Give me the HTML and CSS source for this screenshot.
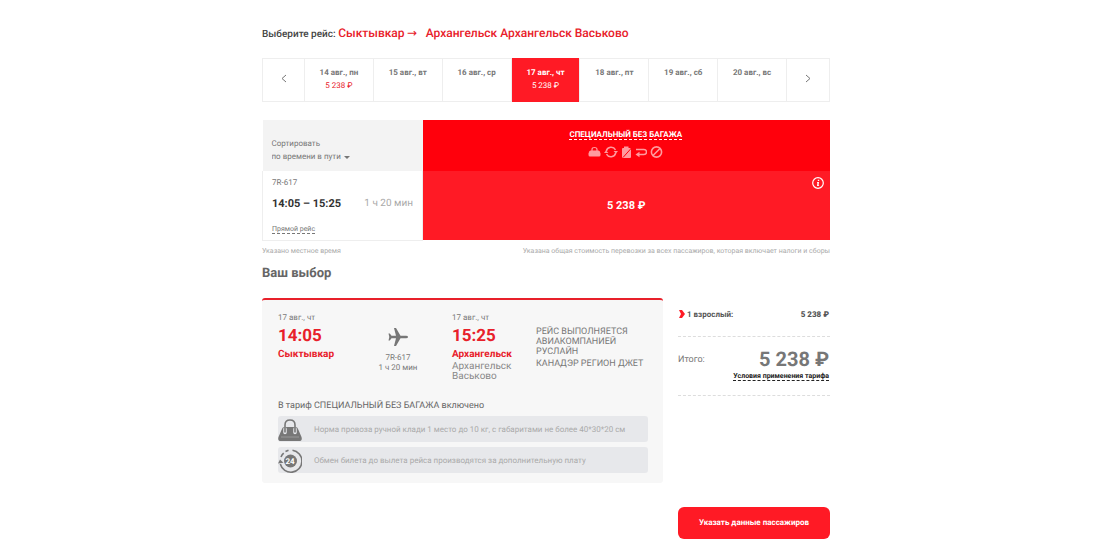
FILE: index.html
```html
<!DOCTYPE html>
<html lang="ru">
<head>
    <meta charset="UTF-8">
    <meta name="viewport" content="width=device-width, initial-scale=1.0">
    <title>Выбор рейса</title>
    <link rel="stylesheet" href="styles.css">
</head>
<body>

<main class="page">
    <h1 class="route">Выберите рейс: <span class="route-from">Сыктывкар</span> <span class="route-arrow">→</span> <span class="route-to">Архангельск Архангельск Васьково</span></h1>

    <!-- Dates -->
    <nav class="dates">
        <button class="date-arrow" aria-label="Предыдущие даты">
            <svg width="6" height="9" viewBox="0 0 6 9"><path d="M5 1 1 4.500 5 8"/></svg>
        </button>
        <button class="date">14 авг., пн <span class="date-price">5 238 ₽</span></button>
        <button class="date">15 авг., вт</button>
        <button class="date">16 авг., ср</button>
        <button class="date active">17 авг., чт <span class="date-price">5 238 ₽</span></button>
        <button class="date">18 авг., пт</button>
        <button class="date">19 авг., сб</button>
        <button class="date">20 авг., вс</button>
        <button class="date-arrow" aria-label="Следующие даты">
            <svg width="6" height="9" viewBox="0 0 6 9"><path d="M1 1 5 4.500 1 8"/></svg>
        </button>
    </nav>

    <!-- Flights and fares -->
    <table class="fares">
        <tr class="fares-head">
            <th class="sort">
                <label for="sort">Сортировать</label>
                <div class="sort-field">
                    <select id="sort">
                        <option>по времени в пути</option>
                    </select>
                    <svg width="6" height="5" viewBox="0 0 6 5"><path d="M0 2h6L3 5z" fill="#777"/></svg>
                </div>
            </th>
            <th class="fare-name">
                <a href="#">СПЕЦИАЛЬНЫЙ БЕЗ БАГАЖА</a>
                <div class="fare-icons">
                    <!-- hand luggage -->
                    <svg width="13" height="12" viewBox="0 0 13 12"><path d="M2.500 4.500h8q1.500 0 2 3v1.500q0 1.500-1.500 1.500H2Q.5 10.500.5 9V7.500q.5-3 2-3z" fill="currentColor"/><path d="M4 5V3.500Q4 1.500 6.500 1.500T9 3.500V5" fill="none" stroke="currentColor" stroke-width="1.200"/></svg>
                    <!-- exchange -->
                    <svg width="14" height="12" viewBox="0 0 14 12" fill="none" stroke="currentColor" stroke-width="1.500"><path d="M2.300 5A5 5 0 0 1 11.500 3.800M11.700 7A5 5 0 0 1 2.500 8.200"/><path d="M9.500 5h4.500L12 7.500zM4.500 7H0L2 4.500z" fill="currentColor" stroke="none"/></svg>
                    <!-- no baggage -->
                    <svg width="11" height="12" viewBox="0 0 11 12"><path d="M3 2V.5h4.500V2H9q1 0 1 1v8q0 1-1 1H2q-1 0-1-1V3q0-1 1-1z" fill="currentColor"/><path d="M2 11.500 10.500 2" stroke="#ff000c" stroke-width="1"/></svg>
                    <!-- refund -->
                    <svg width="12" height="12" viewBox="0 0 12 12"><path d="M1 3.500h8a2 2 0 0 1 0 5H4" fill="none" stroke="currentColor" stroke-width="1.500"/><path d="M.5 8.500 4.500 5.700v5.600z" fill="currentColor"/></svg>
                    <!-- not refundable -->
                    <svg width="13" height="12" viewBox="0 0 13 12" fill="none" stroke="currentColor" stroke-width="1.600"><circle cx="6.500" cy="6" r="5.100"/><path d="M3 9.500 10 2.500"/></svg>
                </div>
            </th>
        </tr>
        <tr class="fares-row">
            <td class="flight">
                <div class="flight-number">7R-617</div>
                <div class="flight-time"><b>14:05 – 15:25</b> <span>1 ч 20 мин</span></div>
                <a href="#">Прямой рейс</a>
            </td>
            <td class="fare-price">
                <button class="price">5 238 ₽</button>
                <button class="info" aria-label="Информация о тарифе">
                    <svg width="12" height="12" viewBox="0 0 12 12"><circle cx="6" cy="6" r="5.300" fill="none" stroke="#fff" stroke-width="1.200"/><path d="M5.800 2.800h1.400V4H5.800zM5 5h2L6.600 8.200h.5V9H5l.4-3.200H5z" fill="#fff"/></svg>
                </button>
            </td>
        </tr>
    </table>
    <div class="notes">
        <span>Указано местное время</span>
        <span>Указана общая стоимость перевозки за всех пассажиров, которая включает налоги и сборы</span>
    </div>

    <h2 class="choice-title">Ваш выбор</h2>

    <div class="choice">
        <!-- Selected flight -->
        <section class="ticket">
            <div class="ticket-info">
                <div class="point">
                    <div class="point-date">17 авг., чт</div>
                    <div class="point-time">14:05</div>
                    <div class="point-city">Сыктывкар</div>
                </div>
                <div class="plane">
                    <svg width="20" height="20" viewBox="0 0 20 20"><path d="M20 10q0-1.300-2-1.300h-5.500L8 1H6l2 7.700H3.500L1.800 6.500H.5L1.300 10 .5 13.500h1.300l1.700-2.200H8L6 19h2l4.500-7.700H18q2 0 2-1.300z" fill="#777"/></svg>
                    <div>7R-617</div>
                    <div>1 ч 20 мин</div>
                </div>
                <div class="point">
                    <div class="point-date">17 авг., чт</div>
                    <div class="point-time">15:25</div>
                    <div class="point-city">Архангельск</div>
                    <div class="point-airport">Архангельск Васьково</div>
                </div>
                <div class="carrier">
                    <p>РЕЙС ВЫПОЛНЯЕТСЯ АВИАКОМПАНИЕЙ РУСЛАЙН</p>
                    <p>КАНАДЭР РЕГИОН ДЖЕТ</p>
                </div>
            </div>

            <h3 class="included-title">В тариф СПЕЦИАЛЬНЫЙ БЕЗ БАГАЖА включено</h3>
            <ul class="included">
                <li>
                    <svg width="24" height="24" viewBox="0 0 24 24"><path d="M7 11V7q0-5 5-5t5 5v4" fill="none" stroke="#777" stroke-width="1.600"/><path d="M6 9h12q1.500 0 2.500 3l3 7q1.200 4-2.500 4H3q-3.700 0-2.500-4l3-7Q4.500 9 6 9z" fill="#777"/><path d="M7 11v3.500M17 11v3.500" stroke="#e7e8eb" stroke-width="3.500" stroke-linecap="round"/><path d="M7 9v5.500M17 9v5.500" stroke="#777" stroke-width="1.600"/><path d="M3 19h18" stroke="#999" stroke-width="1"/></svg>
                    Норма провоза ручной клади 1 место до 10 кг, с габаритами не более 40*30*20 см
                </li>
                <li>
                    <svg width="24" height="24" viewBox="0 0 24 24"><path d="M14.500 1.300A11 11 0 1 1 2.300 15M3 8q1-2.300 2.700-3.800M7.500 2.500l3-1.200" fill="none" stroke="#777" stroke-width="1.600"/><path d="M0 14.500 2 10.500l3.500 3.300z" fill="#777"/><circle cx="12.500" cy="12" r="6.500" fill="#777"/><text x="12" y="15" class="icon-text">24</text></svg>
                    Обмен билета до вылета рейса производятся за дополнительную плату
                </li>
            </ul>
        </section>

        <!-- Price summary -->
        <aside class="summary">
            <div class="summary-row">
                <span><svg width="6" height="8" viewBox="0 0 6 8"><path d="M0 0h3l3 4-3 4H0l2-4z" fill="#ff1a25"/></svg> 1 взрослый:</span>
                <b>5 238 ₽</b>
            </div>
            <div class="summary-total">
                <span>Итого:</span>
                <div>
                    <div class="total">5 238 ₽</div>
                    <a href="#">Условия применения тарифа</a>
                </div>
            </div>
            <button class="submit">Указать данные пассажиров</button>
        </aside>
    </div>
</main>

</body>
</html>
```
FILE: styles.css
```css
* {
    box-sizing: border-box;
}
body {
    margin: 0;
    padding: 0 8px 0 0;
    background-color: #fff;
    color: #777;
    font-family: Roboto, sans-serif;
    font-size: 8px;
    line-height: 12px;
    text-rendering: geometricPrecision;
}
button, select {
    font: inherit;
    color: inherit;
    text-rendering: inherit;
    border: none;
    padding: 0;
    background: none;
    cursor: pointer;
}
h1, h2, h3, p, ul {
    margin: 0;
    padding: 0;
}
.page {
    max-width: 568px;
    margin: 0 auto;
    padding-top: 24px;
}
.route {
    height: 18px;
    font-size: 10px;
    line-height: 18px;
    font-weight: 500;
    color: #444;
}
.route span {
    font-size: 12px;
    color: #e8202a;
}
.route .route-arrow {
    font-family: "DejaVu Sans", sans-serif;
}
.route-to {
    margin-left: 6px;
}

/* Dates */
.dates {
    display: flex;
    height: 44px;
    margin-top: 16px;
    border: 1px solid #eee;
}
.dates button {
    border-right: 1px solid #eee;
}
.dates button:last-child {
    border-right: none;
}
.date-arrow {
    flex: 0 0 42px;
}
.date-arrow path {
    fill: none;
    stroke: #777;
    stroke-width: 1;
}
.date {
    display: flex;
    flex: 1;
    flex-direction: column;
    align-items: center;
    padding-top: 7px;
    line-height: 13px;
    font-weight: 700;
}
.date-price {
    font-weight: 400;
    color: #e8202a;
}
.date.active {
    margin: -1px 0;
    padding-top: 8px;
    background-color: #ff1a25;
}
.date.active, .date.active .date-price {
    color: #fff;
}

/* Fares */
.fares {
    width: 100%;
    margin-top: 18px;
    border-collapse: collapse;
    table-layout: fixed;
}
.fares th, .fares td {
    padding: 0;
    text-align: left;
    vertical-align: top;
    font-weight: 400;
}
.fares a {
    text-decoration: none;
    border-bottom: 1px dashed;
    color: inherit;
}
.fares-head {
    height: 51px;
}
.fares-row {
    height: 69px;
}
.fares .sort {
    width: 160px;
    padding: 17px 9px 0;
    line-height: 13px;
    background-color: #f3f3f3;
}
.sort label {
    display: block;
}
.sort-field {
    display: flex;
    align-items: center;
    gap: 2px;
}
.sort select {
    appearance: none;
}
.fares .fare-name {
    padding-top: 9px;
    text-align: center;
    font-weight: 700;
    color: #fff;
    background-color: #ff000c;
}
.fare-name a {
    line-height: 10px;
}
.fare-icons {
    display: flex;
    justify-content: center;
    align-items: center;
    gap: 3px;
    margin-top: 5px;
    color: #ff9a9f;
}
.fares .flight {
    padding: 6px 9px 0;
    border: 1px solid #eee;
    border-top: none;
}
.flight a {
    font-size: 7px;
    line-height: 10px;
}
.flight-time {
    display: flex;
    justify-content: space-between;
    align-items: center;
    margin: 7px 0 11px;
    line-height: 16px;
}
.flight-time b {
    font-size: 11px;
    color: #333;
}
.flight-time span {
    font-size: 10px;
    color: #aaa;
}
.fares .fare-price {
    position: relative;
    background-color: #ff1a25;
    color: #fff;
}
.price {
    width: 100%;
    height: 69px;
    font-size: 11px;
    font-weight: 700;
}
.info {
    position: absolute;
    top: 6px;
    right: 6px;
    height: 12px;
}
.info svg {
    display: block;
}
.notes {
    display: flex;
    justify-content: space-between;
    margin-top: 4px;
    font-size: 7px;
    color: #aaa;
}
.choice-title {
    margin-top: 8px;
    font-size: 13px;
    line-height: 18px;
    font-weight: 700;
    color: #666;
}

/* Selected flight */
.choice {
    display: flex;
    gap: 15px;
    margin-top: 15px;
}
.ticket {
    flex: 1;
    align-self: flex-start;
    padding: 12px 15px 10px 16px;
    border-top: 2px solid #e8202a;
    border-radius: 3px;
    background-color: #f7f7f7;
}
.ticket-info {
    display: grid;
    grid-template-columns: 66px 108px 84px 1fr;
    height: 76px;
}
.point-date {
    line-height: 12px;
}
.point-time {
    font-size: 17px;
    line-height: 25px;
    font-weight: 700;
    color: #e8202a;
}
.point-city {
    font-size: 10px;
    font-weight: 700;
    color: #e8202a;
}
.point-airport {
    margin-top: 1px;
    font-size: 10px;
    line-height: 10px;
    color: #888;
}
.plane {
    padding-top: 15px;
    text-align: center;
    line-height: 10px;
}
.plane svg {
    display: block;
    margin: 0 auto 6px;
}
.carrier {
    padding-top: 15px;
    font-size: 9px;
    line-height: 10px;
}
.carrier p {
    margin-bottom: 2px;
}
.included-title {
    margin-top: 13px;
    font-size: 9px;
    line-height: 11px;
    font-weight: 400;
    color: #666;
}
.included {
    margin-top: -1px;
    list-style: none;
}
.included li {
    display: flex;
    align-items: center;
    gap: 12px;
    height: 26px;
    padding-top: 2px;
    margin-top: 5px;
    border-radius: 3px;
    background-color: #e7e8eb;
    color: #aaa;
}
.icon-text {
    font-size: 8px;
    font-weight: 700;
    text-anchor: middle;
    fill: #fff;
}

/* Price summary */
.summary {
    display: flex;
    flex-direction: column;
    flex: 0 0 152px;
}
.summary-row {
    display: flex;
    justify-content: space-between;
    padding: 11px 1px 15px;
    font-weight: 700;
    color: #555;
    border-bottom: 1px dashed #ddd;
}
.summary-row svg {
    vertical-align: middle;
}
.summary-total {
    display: flex;
    justify-content: space-between;
    padding: 12px 1px 13px 0;
    border-bottom: 1px dashed #ddd;
}
.summary-total > span {
    padding-top: 5px;
    font-size: 9px;
}
.summary-total > div {
    text-align: right;
}
.total {
    font-size: 20px;
    line-height: 21px;
    font-weight: 700;
}
.summary a {
    font-size: 7px;
    font-weight: 700;
    line-height: 10px;
    color: #222;
    text-decoration: none;
    border-bottom: 1px dashed;
}
.submit {
    height: 32px;
    margin-top: 111px;
    border-radius: 6px;
    font-weight: 700;
    color: #fff;
    background-color: #ff1a25;
}
```
